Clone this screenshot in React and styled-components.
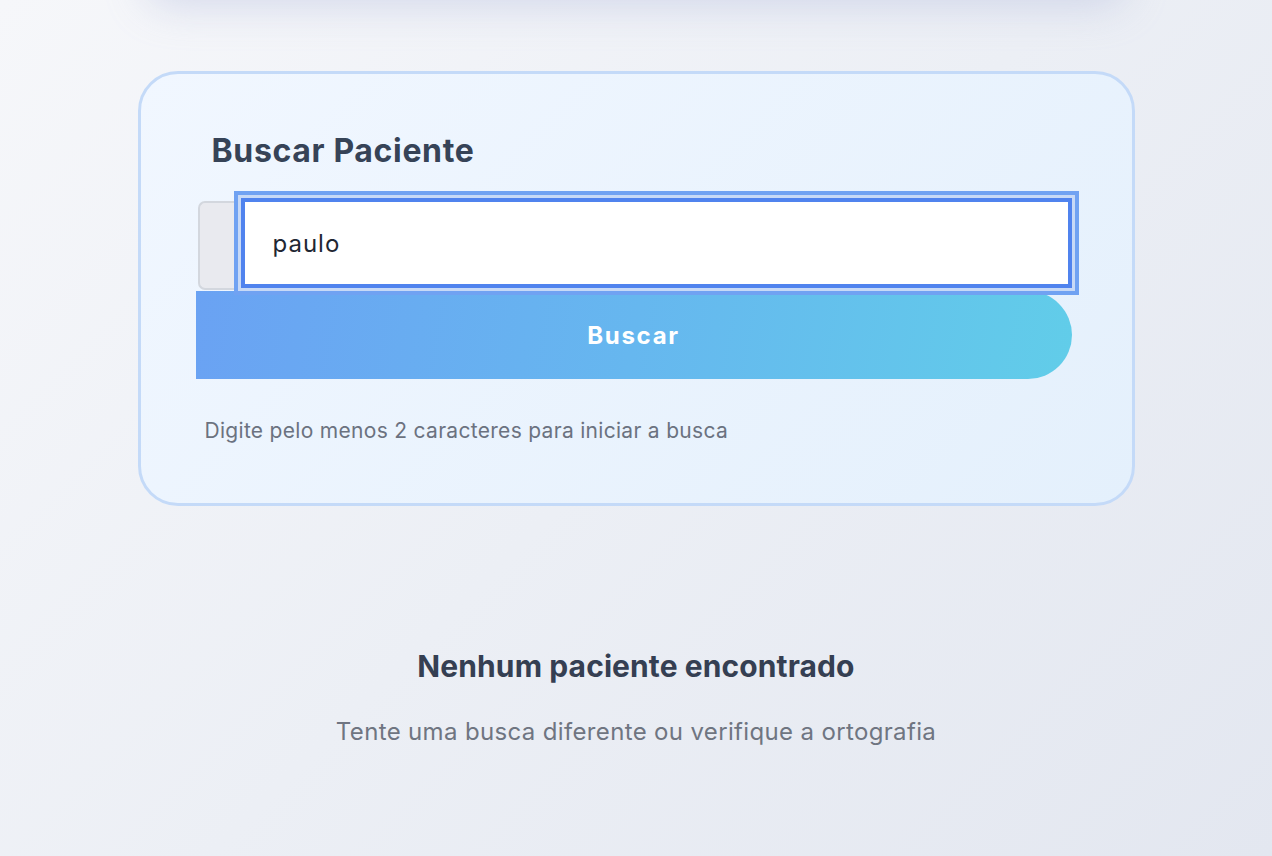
import React from 'react'
import styled, { createGlobalStyle } from 'styled-components'

const GlobalStyle = createGlobalStyle`
  html, body {
    margin: 0;
    padding: 0;
    height: 100%;
  }
  body {
    font-family: Inter, "Noto Sans", "Liberation Sans", sans-serif;
    background: linear-gradient(135deg, #f6f7fa 0%, #eceff5 50%, #e3e7f0 100%);
    overflow: hidden;
  }
`;

export default function App() {
  return (
    <>
      <GlobalStyle />
      <PageStyle>
        <HeaderShadow />
        <SearchCard>
          <h2 className='title'>Buscar Paciente</h2>
          <div className='row'>
            <Prefix />
            <SearchInput defaultValue="paulo" autoFocus $focused />
          </div>
          <SearchButton>Buscar</SearchButton>
          <p className='hint'>Digite pelo menos 2 caracteres para iniciar a busca</p>
        </SearchCard>
        <EmptyState>
          <h3>Nenhum paciente encontrado</h3>
          <p>Tente uma busca diferente ou verifique a ortografia</p>
        </EmptyState>
      </PageStyle>
    </>
  )
}

const PageStyle = styled.div`
  min-height: 856px;
  display: flex;
  flex-direction: column;
  align-items: center;
`;

const HeaderShadow = styled.div`
  width: 980px;
  height: 60px;
  margin-top: -60px;
  margin-bottom: 71px;
  border-radius: 24px;
  background: #e2e6f2;
  box-shadow: 0 6px 40px rgba(175, 185, 220, 0.45);
`;

const SearchCard = styled.section`
  width: 997px;
  box-sizing: border-box;
  padding: 59px 60px 60px 55px;
  border: 3px solid #c4daf8;
  border-radius: 40px;
  background: linear-gradient(135deg, #f1f7ff 0%, #e4f0fc 100%);
  .title{
      margin: 0 0 29px 16px;
      font-size: 32px;
      line-height: 36px;
      font-weight: 700;
      letter-spacing: 0.65px;
      color: #364357;
  }
  .row{
      display: flex;
      align-items: flex-start;
  }
  .hint{
      margin: 39px 0 0 9px;
      font-size: 21px;
      line-height: 25px;
      letter-spacing: 0.3px;
      color: #6b7280;
  }
`;

const Prefix = styled.div`
  flex: 0 0 43px;
  height: 89px;
  margin-top: 3px;
  margin-left: 2px;
  box-sizing: border-box;
  background: #e9eaef;
  border: 2px solid #d3d7de;
  border-right: none;
  border-radius: 7px 0 0 7px;
`;

const SearchInput = styled.input`
  flex: 1;
  height: 90px;
  box-sizing: border-box;
  padding: 0 28px;
  border: 4px solid #5083ee;
  border-radius: 0;
  background: #fff;
  font-family: Inter, "Noto Sans", sans-serif;
  font-size: 24px;
  letter-spacing: 1px;
  color: #1f2733;
  caret-color: #1f2733;
  outline: none;
  position: relative;
  box-shadow: ${({ $focused }) => $focused ? '0 0 0 3px #c7d9f6, 0 0 0 7px #70a2f2' : 'none'};
`;

const SearchButton = styled.button`
  display: block;
  width: 876px;
  height: 88px;
  margin: 1px 0 0 0;
  border: none;
  border-radius: 0 44px 44px 0;
  background: linear-gradient(100deg, #6aa2f3 0%, #66b7ef 50%, #61cde9 100%);
  color: #fff;
  font-family: Inter, "Noto Sans", sans-serif;
  font-size: 24px;
  font-weight: 700;
  letter-spacing: 1.7px;
  cursor: pointer;
`;

const EmptyState = styled.div`
  margin-top: 142px;
  text-align: center;
  h3{
      margin: 0;
      font-size: 30px;
      line-height: 36px;
      font-weight: 700;
      letter-spacing: 0.1px;
      color: #353f52;
  }
  p{
      margin: 33px 0 0;
      font-size: 24px;
      line-height: 29px;
      letter-spacing: 0.35px;
      color: #6f7581;
  }
`;
